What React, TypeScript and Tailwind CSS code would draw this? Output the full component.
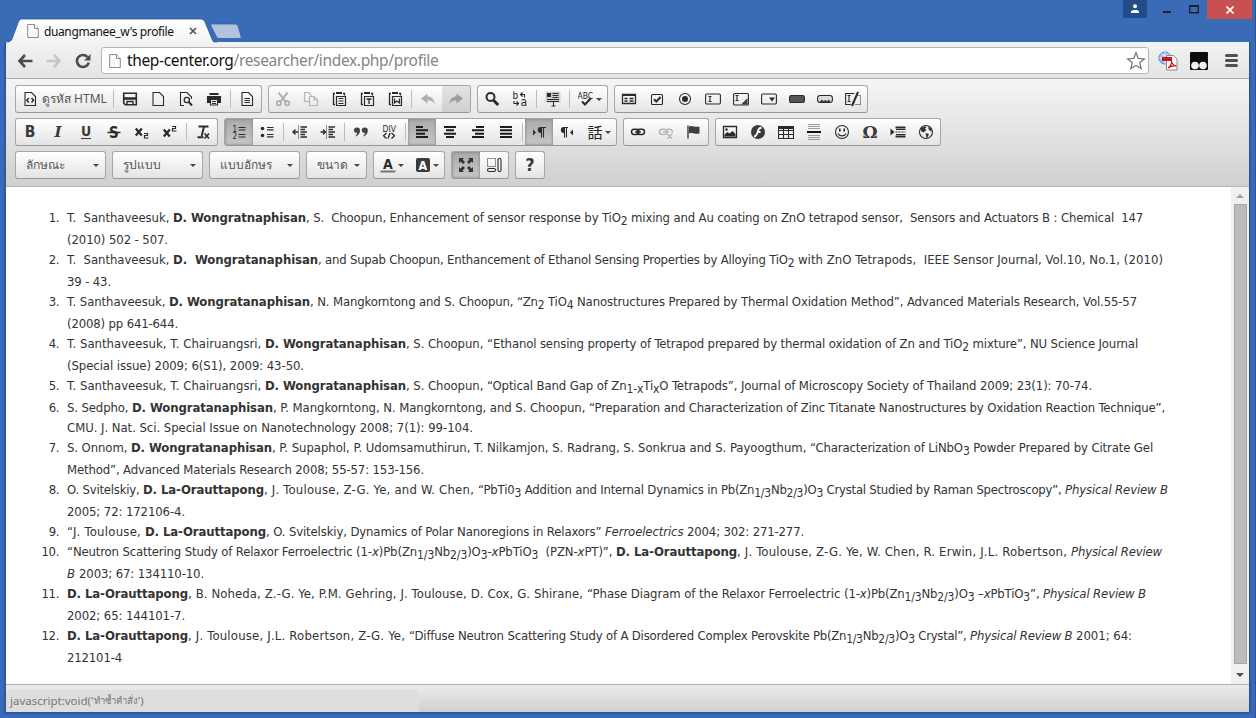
import React, { ReactNode, useLayoutEffect, useRef, useState } from "react";

/* ---------- text runs with a fixed advance ---------- */

function Run({ w, n, className, children }: { w: number; n: number; className?: string; children: ReactNode }) {
  const ref = useRef<HTMLSpanElement>(null);
  const [ls, setLs] = useState<number | null>(null);
  useLayoutEffect(() => {
    if (ls === null && ref.current) {
      setLs((w - ref.current.getBoundingClientRect().width) / n);
    }
  }, [ls, w, n]);
  return (
    <span className={className} style={ls === null ? undefined : { width: w, letterSpacing: ls + "px" }} ref={ref}>
      {children}
    </span>
  );
}

/* [start, kind, text]; "_x_" marks a subscript and "~x~" an italic letter */
type Seg = [number, "n" | "b" | "i", string];
type Line = { h: 20 | 22; end: number; segs: Seg[] };

function rich(s: string): ReactNode[] {
  return s.split(/(_[^_]+_|~[^~]+~)/).map((p, i) => {
    if (p.startsWith("_")) return <sub key={i} className="text-[12px]">{p.slice(1, -1)}</sub>;
    if (p.startsWith("~")) return <em key={i}>{p.slice(1, -1)}</em>;
    return p;
  });
}

const kinds = {
  n: "shrink-0 whitespace-pre",
  b: "shrink-0 whitespace-pre font-bold",
  i: "shrink-0 whitespace-pre italic",
};

function TextLine({ line }: { line: Line }) {
  return (
    <div className={line.h === 22 ? "flex h-[22px] leading-5" : "flex h-5 leading-5"}>
      {line.segs.map(([x, k, t], i) => {
        const next = i + 1 < line.segs.length ? line.segs[i + 1][0] : line.end;
        return (
          <Run key={i} w={next - x} n={t.replace(/[_~]/g, "").length} className={kinds[k]}>
            {rich(t)}
          </Run>
        );
      })}
    </div>
  );
}

const items: Line[][] = [
  [
    { h: 22, end: 1143, segs: [[67, "n", "T.  Santhaveesuk, "], [173, "b", "D. Wongratnaphisan"], [306, "n", ", S.  Choopun, Enhancement of sensor response by "], [602, "n", "TiO_2_ mixing and Au coating on ZnO tetrapod sensor,  Sensors and Actuators B : Chemical  147"]] },
    { h: 20, end: 168, segs: [[67, "n", "(2010) 502 - 507."]] },
  ],
  [
    { h: 22, end: 1163, segs: [[67, "n", "T.  Santhaveesuk, "], [173, "b", "D.  Wongratanaphisan"], [318, "n", ", and Supab Choopun, Enthancement of Ethanol Sensing Properties by Alloying TiO_2_ "], [798, "n", "with ZnO Tetrapods,  IEEE Sensor Journal, Vol.10, No.1, (2010)"]] },
    { h: 20, end: 111, segs: [[67, "n", "39 - 43."]] },
  ],
  [
    { h: 22, end: 1137, segs: [[67, "n", "T. Santhaveesuk, "], [169, "b", "D. Wongratanaphisan"], [310, "n", ", N. Mangkorntong and S. Choopun, "], [517, "n", "“Zn_2_ TiO_4_ "], [577, "n", "Nanostructures Prepared by Thermal Oxidation Method”, Advanced Materials Research, Vol.55-57"]] },
    { h: 20, end: 178, segs: [[67, "n", "(2008) pp 641-644."]] },
  ],
  [
    { h: 22, end: 1138, segs: [[67, "n", "T. Santhaveesuk, T. Chairuangsri, "], [265, "b", "D. Wongratanaphisan"], [406, "n", ", S. Choopun, "], [487, "n", "“Ethanol sensing property of Tetrapod prepared by thermal oxidation of Zn and TiO_2_ mixture”, NU Science Journal"]] },
    { h: 20, end: 304, segs: [[67, "n", "(Special issue) 2009; 6(S1), 2009: 43-50."]] },
  ],
  [
    { h: 22, end: 1092, segs: [[67, "n", "T. Santhaveesuk, T. Chairuangsri, "], [265, "b", "D. Wongratanaphisan"], [406, "n", ", S. Choopun, "], [487, "n", "“Optical Band Gap of Zn_1-x_Ti_x_O Tetrapods”, Journal of Microscopy Society of Thailand 2009; 23(1): 70-74."]] },
  ],
  [
    { h: 20, end: 1165, segs: [[67, "n", "S. Sedpho, "], [132, "b", "D. Wongratanaphisan"], [273, "n", ", P. Mangkorntong, N. Mangkorntong, and S. Choopun, "], [589, "n", "“Preparation and Characterization of Zinc Titanate Nanostructures by Oxidation Reaction Technique”,"]] },
    { h: 20, end: 473, segs: [[67, "n", "CMU. J. Nat. Sci. Special Issue on Nanotechnology 2008; 7(1): 99-104."]] },
  ],
  [
    { h: 22, end: 1153, segs: [[67, "n", "S. Onnom, "], [131, "b", "D. Wongratanaphisan"], [272, "n", ", P. Supaphol, P. Udomsamuthirun, T. Nilkamjon, S. Radrang, S. Sonkrua and S. Payoogthum, "], [810, "n", "“Characterization of LiNbO_3_ Powder Prepared by Citrate Gel"]] },
    { h: 20, end: 424, segs: [[67, "n", "Method”, Advanced Materials Research 2008; 55-57: 153-156."]] },
  ],
  [
    { h: 22, end: 1168, segs: [[67, "n", "O. Svitelskiy, "], [143, "b", "D. La-Orauttapong"], [264, "n", ", J. Toulouse, Z-G. Ye, and W. Chen, "], [478, "n", "“PbTi0_3_ Addition and Internal Dynamics in "], [721, "n", "Pb(Zn_1/3_Nb_2/3_)O_3_ Crystal Studied by Raman Spectroscopy”, "], [1065, "i", "Physical Review B"]] },
    { h: 20, end: 185, segs: [[67, "n", "2005; 72: 172106-4."]] },
  ],
  [
    { h: 20, end: 804, segs: [[67, "n", "“J. Toulouse, "], [145, "b", "D. La-Orauttapong"], [266, "n", ", O. Svitelskiy, Dynamics of Polar Nanoregions in Relaxors” "], [605, "i", "Ferroelectrics "], [687, "n", "2004; 302: 271-277."]] },
  ],
  [
    { h: 22, end: 1162, segs: [[67, "n", "“Neutron Scattering Study of Relaxor Ferroelectric "], [356, "n", "(1-~x~)Pb(Zn_1/3_Nb_2/3_)O_3_-~x~PbTiO_3_  (PZN-~x~PT)”, "], [616, "b", "D. La-Orauttapong"], [737, "n", ", J. Toulouse, Z-G. Ye, W. Chen, R. Erwin, J.L. Robertson, "], [1071, "i", "Physical Review"]] },
    { h: 20, end: 204, segs: [[67, "i", "B "], [79, "n", "2003; 67: 134110-10."]] },
  ],
  [
    { h: 22, end: 1146, segs: [[67, "b", "D. La-Orauttapong"], [188, "n", ", B. Noheda, Z.-G. Ye, P.M. Gehring, J. Toulouse, D. Cox, G. Shirane, "], [587, "n", "“Phase Diagram of the Relaxor Ferroelectric "], [844, "n", "(1-~x~)Pb(Zn_1/3_Nb_2/3_)O_3_ –~x~PbTiO_3_”, "], [1043, "i", "Physical Review B"]] },
    { h: 20, end: 185, segs: [[67, "n", "2002; 65: 144101-7."]] },
  ],
  [
    { h: 22, end: 1132, segs: [[67, "b", "D. La-Orauttapong"], [188, "n", ", J. Toulouse, J.L. Robertson, Z-G. Ye, "], [409, "n", "“Diffuse Neutron Scattering Study of A Disordered Complex Perovskite "], [813, "n", "Pb(Zn_1/3_Nb_2/3_)O_3_ Crystal”, "], [970, "i", "Physical Review B "], [1076, "n", "2001; 64:"]] },
    { h: 20, end: 122, segs: [[67, "n", "212101-4"]] },
  ],
];

/* ---------- toolbar ---------- */

function Svg({ children, w = 16, c = "#2a2a2a" }: { children: ReactNode; w?: number; c?: string }) {
  return (
    <svg width={w} height={16} viewBox={`0 0 ${w} 16`} fill="none" stroke={c} strokeWidth="1.1" className="shrink-0" style={{ color: c }}>
      {children}
    </svg>
  );
}

function Group({ children }: { children: ReactNode }) {
  return (
    <div className="flex h-7 shrink-0 overflow-hidden rounded-[3px] border border-[#a6a6a6] border-b-[#979797] bg-linear-to-b from-white to-[#e4e4e4]">
      {children}
    </div>
  );
}

function Btn({ children, on, dim }: { children: ReactNode; on?: boolean; dim?: boolean }) {
  const cls = on
    ? "flex h-[26px] w-7 shrink-0 items-center justify-center bg-linear-to-b from-[#aaaaaa] to-[#c6c6c6] shadow-[inset_0_0_3px_#777]"
    : dim
      ? "flex h-[26px] w-7 shrink-0 items-center justify-center bg-linear-to-b from-[#e4e4e4] to-[#cfcfcf]"
      : "flex h-[26px] w-7 shrink-0 items-center justify-center";
  return <button className={cls}>{children}</button>;
}

function Caret() {
  return <span className="h-0 w-0 border-x-[3px] border-t-[3px] border-x-transparent border-t-[#474747]" />;
}

function ArrowBtn({ children }: { children: ReactNode }) {
  return <button className="flex h-[26px] w-[35px] shrink-0 items-center gap-[2px] pl-[6px]">{children}<Caret /></button>;
}

function Sep() {
  return <span className="mx-[2px] mt-1 h-[18px] w-px shrink-0 bg-[#bdbdbd]" />;
}

function Combo({ label, small }: { label: string; small?: boolean }) {
  return (
    <Group>
      <button className={small ? "flex w-[59px] items-center justify-between pr-[6px] pl-[10px]" : "flex w-[89px] items-center justify-between pr-[6px] pl-[10px]"}>
        <span className="text-[12px] whitespace-nowrap text-[#555]">{label}</span>
        <Caret />
      </button>
    </Group>
  );
}

const page = "M3 1.5h6.5l4 4v9H3z";

function Letter({ t, cls }: { t: string; cls?: string }) {
  return <span className={"font-['DejaVu_Sans',sans-serif] font-stretch-condensed leading-4 font-bold text-[#3a3a3a] " + (cls || "text-[15.5px]")}>{t}</span>;
}

function Clip({ children }: { children: ReactNode }) {
  return (
    <Svg>
      <path d="M4 13.500H2.500v-11H4M12 2.500h1.500v2" strokeWidth="1.300" />
      <path d="M5 2h6" strokeWidth="2" />
      <path d="M5.500 5.500h9v9h-9z" strokeWidth="1.200" />
      {children}
    </Svg>
  );
}

function Lines({ rows }: { rows: [number, number][] }) {
  return <Svg>{rows.map(([x, l], i) => <path key={i} d={`M${x} ${3 + i * 3.33}h${l}`} strokeWidth="2" stroke="#1c1c1c" />)}</Svg>;
}

function Glyph({ x, y, s, children, w = "700" }: { x: number; y: number; s: number; children: ReactNode; w?: string }) {
  return <text x={x} y={y} fontSize={s} fontWeight={w} fill="currentColor" stroke="none" className="font-['DejaVu_Sans',sans-serif] font-stretch-condensed">{children}</text>;
}

function Row1() {
  return (
    <div className="flex gap-[6px]">
      <Group>
        <button className="flex w-[95px] shrink-0 items-center gap-[4px] pl-[6px]">
          <Svg><path d={page} /><path d="M6.8 7l-2 2.2 2 2.2M9.5 7l2 2.2-2 2.2" strokeWidth="1.5" /></Svg>
          <span className="text-[12px] whitespace-nowrap text-[#555]">ดูรหัส HTML</span>
        </button>
        <Sep />
        <Btn><Svg><path d="M1.700 2.200h12.600v11.600H3.200L1.700 12z" strokeWidth="1.600" /><path d="M2 7.500h12" strokeWidth="2.600" /><path d="M5 13.500v-3h6v3" strokeWidth="1.400" /></Svg></Btn>
        <Btn><Svg><path d={page} /></Svg></Btn>
        <Btn><Svg><path d="M6 14.500H2.500v-13H9l4.500 4.500v2" /><circle cx="8.800" cy="9" r="2.600" strokeWidth="1.300" /><path d="M10.700 11l3.300 3.500" strokeWidth="1.900" /></Svg></Btn>
        <Btn><Svg><path d="M3.500 3h9" strokeWidth="2" /><path d="M1.500 5.500h13v6h-2V8h-9v3.500h-2z" fill="#2a2a2a" /><path d="M4.500 8.500h7v5.500h-7zM6 10.500h4M6 12.500h4" /></Svg></Btn>
        <Sep />
        <Btn><Svg><path d={page} /><path d="M5.500 7.500h5.500M5.500 9.500h5.500M5.500 11.500h5.500" strokeWidth="1.200" /></Svg></Btn>
      </Group>
      <Group>
        <Btn><Svg c="#adadad"><path d="M3.500 1.500l7 9M12.500 1.500l-7 9" strokeWidth="2" /><circle cx="3.800" cy="12.300" r="2.100" strokeWidth="1.700" /><circle cx="12.200" cy="12.300" r="2.100" strokeWidth="1.700" /></Svg></Btn>
        <Btn><Svg c="#b5b5b5"><path d="M6.500 10.500h-5v-9h4l3 3M6.500 5.500h4.500l3.500 3.500v5.500h-8z" strokeWidth="1.200" /><path d="M11 6v3h3" /></Svg></Btn>
        <Btn><Clip><path d="M7.500 7.500h5M7.500 10h5M7.500 12.500h5" /></Clip></Btn>
        <Btn><Clip><path d="M7.500 8h5M10 8v5" strokeWidth="1.300" /></Clip></Btn>
        <Btn><Clip><path d="M7.500 7.500v4.500l2.500-2 2.500 2V7.500" strokeWidth="1.300" /></Clip></Btn>
        <Sep />
        <Btn><Svg><path d="M7.500 2.500L1 7.500l6.500 5V9.600c3 0 5 .4 7 3.400C14.500 8 11.500 5.500 7.500 5.500z" fill="#b0b0b0" stroke="none" /></Svg></Btn>
        <Btn dim><Svg><path d="M8.500 2.500L15 7.500l-6.500 5V9.600c-3 0-5 .4-7 3.400C1.500 8 4.500 5.500 8.500 5.500z" fill="#9b9b9b" stroke="none" /></Svg></Btn>
      </Group>
      <Group>
        <Btn><Svg><circle cx="6.500" cy="6" r="4" strokeWidth="2" /><path d="M9.500 9.300l4.700 4.700" strokeWidth="3" /></Svg></Btn>
        <Btn><Svg><Glyph x={0.500} y={8} s={10} w="400">b</Glyph><Glyph x={8.500} y={14.500} s={12} w="400">a</Glyph><path d="M9 3.500h3.500v3M10.500 1.500l-2 2 2 2M2 10v2.500h4M4.500 10.500l2 2-2 2" /></Svg></Btn>
        <Sep />
        <Btn><Svg><path d="M.5 .5h15v11H.5z" fill="#cfcfcf" stroke="none" /><path d="M2.500 2.500h3v3h-3z" fill="#2a2a2a" /><path d="M7.500 2.500h6M7.500 4.500h6M7.500 6.500h6M2 8.500h12M2 10.500h12M8.500 11v4M6.500 15h4" strokeWidth="1" /></Svg></Btn>
        <Sep />
        <ArrowBtn><Svg><Glyph x={-0.500} y={7.500} s={8.500} w="400">ABC</Glyph><path d="M4 10.500l3 3 6-6.500" strokeWidth="2" /></Svg></ArrowBtn>
      </Group>
      <Group>
        <Btn><Svg><path d="M1.500 3.500h13v9h-13z" strokeWidth="1.300" /><path d="M1 4h14" strokeWidth="2" /><path d="M3.500 7.500h3M3.500 10h3M8.500 7.500h4M8.500 10h4" strokeWidth="1.300" /></Svg></Btn>
        <Btn><Svg><rect x="2.500" y="3.500" width="11" height="10" rx="1" /><path d="M5 8.300l2.300 2.300L11.500 6" strokeWidth="2" /></Svg></Btn>
        <Btn><Svg><circle cx="8" cy="8" r="5.500" /><circle cx="8" cy="8" r="3" fill="#2a2a2a" stroke="none" /></Svg></Btn>
        <Btn><Svg><rect x=".6" y="3" width="14.800" height="10" rx="1.200" /><path d="M3.500 5.500h3M3.500 10.500h3M5 5.500v5" /></Svg></Btn>
        <Btn><Svg><rect x=".6" y="2.500" width="14.800" height="11.500" rx="1" /><path d="M2.500 4.500h3M2.500 9.500h3M4 4.500v5M9 13.500L14.500 8M11 13.500l3.500-3.500M13 13.500l1.500-1.500" /></Svg></Btn>
        <Btn><Svg><rect x=".6" y="3" width="14.800" height="10" rx="1.200" /><path d="M8 6.500h6l-3 4z" fill="#2a2a2a" stroke="none" /></Svg></Btn>
        <Btn><Svg><rect x=".6" y="4.500" width="14.800" height="7" rx="1.500" fill="#555" /></Svg></Btn>
        <Btn><Svg><rect x=".6" y="4.500" width="14.800" height="7" rx="2.500" fill="#ddd" /><path d="M2.500 11l2-2.500L6.500 10l2-1 1.500 1 2-1.500 1.500 2.500z" fill="#444" stroke="none" /></Svg></Btn>
        <Btn><Svg><path d="M9.500 2.500H.6v11H6" /><path d="M2.500 4.500h3M2.500 10.500h3M4 4.500v6" /><path d="M13 1L7 15" strokeWidth="2" /><path d="M13.500 4.500h2v9H10" strokeDasharray="1 1" /></Svg></Btn>
      </Group>
    </div>
  );
}

function Row2() {
  return (
    <div className="flex gap-[6px]">
      <Group>
        <Btn><Letter t="B" /></Btn>
        <Btn><span className="font-['DejaVu_Serif',serif] text-[15px] leading-4 font-bold text-[#3a3a3a] italic">I</span></Btn>
        <Btn><Letter t="U" cls="border-b border-[#3a3a3a] text-[14px] leading-[13px]" /></Btn>
        <Btn><Svg><Glyph x={3} y={13.500} s={15}>S</Glyph><path d="M1.500 8.500h13" strokeWidth="1.400" /></Svg></Btn>
        <Btn><Svg><path d="M1.800 4.500l6 7M7.800 4.500l-6 7" strokeWidth="2.300" /><path d="M10 9.500h3.500v2h-3v2.500h4" strokeWidth="1.200" /></Svg></Btn>
        <Btn><Svg><path d="M1.800 5.500l6 7M7.800 5.500l-6 7" strokeWidth="2.300" /><path d="M10 2.500h3.500v2h-3V7h4" strokeWidth="1.200" /></Svg></Btn>
        <Sep />
        <Btn><Svg><path d="M3.500 2.500h10M9 2.500l-2.300 9.500M2.500 13.300h6" strokeWidth="1.900" /><path d="M9.500 9.500l4.500 5M14 9.500l-4.500 5" strokeWidth="1.600" /></Svg></Btn>
      </Group>
      <Group>
        <Btn on><Svg><Glyph x={1.500} y={7.500} s={8} w="400">1</Glyph><Glyph x={1.500} y={14.500} s={8} w="400">2</Glyph><path d="M7.500 3.500h7M7.500 6h7M7.500 10.500h7M7.500 13h7" strokeWidth="1.200" /></Svg></Btn>
        <Btn><Svg><circle cx="3.500" cy="4.500" r="1.800" fill="#2a2a2a" stroke="none" /><circle cx="3.500" cy="11.500" r="1.800" fill="#2a2a2a" stroke="none" /><path d="M8 3.500h6.500M8 5.800h6.500M8 10.500h6.500M8 12.800h6.500" strokeWidth="1.200" /></Svg></Btn>
        <Sep />
        <Btn><Svg><path d="M6.500 1.500v13" strokeDasharray="1 1" /><path d="M8.500 3h6.500M8.500 5.500h4.500M8.500 8h6.500M8.500 10.500h4.500M8.500 13h6.500M.5 8h5.500M3.500 5.500L1 8l2.500 2.500" strokeWidth="1.300" /></Svg></Btn>
        <Btn><Svg><path d="M6.500 1.500v13" strokeDasharray="1 1" /><path d="M8.500 3h6.500M8.500 5.500h4.500M8.500 8h6.500M8.500 10.500h4.500M8.500 13h6.500M.5 8H6M3 5.500L5.500 8 3 10.500" strokeWidth="1.300" /></Svg></Btn>
        <Sep />
        <Btn><Svg><path d="M3.800 3.500a2.700 2.700 0 1 0 .5 5.300C4 10.500 3 11.500 1.800 12.500 5 12 7 9.500 7 6.500a3 3 0 0 0-3.200-3zM11.600 3.500a2.700 2.700 0 1 0 .5 5.300c-.3 1.700-1.300 2.700-2.500 3.700 3.200-.5 5.200-3 5.200-6a3 3 0 0 0-3.200-3z" fill="#444" stroke="none" /></Svg></Btn>
        <Btn><Svg><Glyph x={1.500} y={7.500} s={8.500} w="400">DIV</Glyph><path d="M5.500 9l-3 2.800 3 2.800M10.500 9l3 2.800-3 2.800M9 9l-2 5.500" strokeWidth="1.300" /></Svg></Btn>
        <Sep />
        <Btn on><Lines rows={[[2, 7], [2, 12], [2, 9], [2, 12]]} /></Btn>
        <Btn><Lines rows={[[2, 12], [4, 8], [2, 12], [4, 8]]} /></Btn>
        <Btn><Lines rows={[[6, 8], [2, 12], [5, 9], [2, 12]]} /></Btn>
        <Btn><Lines rows={[[2, 12], [2, 12], [2, 12], [2, 12]]} /></Btn>
        <Sep />
        <Btn on><Svg><path d="M2 5.500l3 3-3 3z" fill="#2a2a2a" stroke="none" /><path d="M10.500 3.500v10M12.500 3.500v10M10 3.500h5" /><path d="M10.500 3H9.800a3 3 0 0 0 0 6h.7z" fill="#2a2a2a" stroke="none" /></Svg></Btn>
        <Btn><Svg><path d="M14 5.500l-3 3 3 3z" fill="#2a2a2a" stroke="none" /><path d="M5.500 3.500v10M7.500 3.500v10M5 3.500h4" /><path d="M5.500 3h-.7a3 3 0 0 0 0 6h.7z" fill="#2a2a2a" stroke="none" /></Svg></Btn>
        <ArrowBtn><span className="w-4 font-['Noto_Sans_CJK_JP',sans-serif] text-[15px] leading-4 text-[#222]">話</span></ArrowBtn>
      </Group>
      <Group>
        <Btn><Svg><rect x="1.500" y="5.200" width="7.500" height="5.200" rx="2.600" strokeWidth="1.500" /><rect x="7" y="5.200" width="7.500" height="5.200" rx="2.600" strokeWidth="1.500" /><path d="M5 7.800h6" strokeWidth="1.300" /></Svg></Btn>
        <Btn><Svg c="#b5b5b5"><rect x="1.500" y="5.200" width="7.500" height="5.200" rx="2.600" strokeWidth="1.500" /><path d="M9 5.200h3a2.600 2.600 0 0 1 2 3.800M5 7.800h6M9.500 10l4.500 4.500M14 10l-4.500 4.500" strokeWidth="1.500" /></Svg></Btn>
        <Btn><Svg><path d="M2 1.500v13" strokeWidth="1.300" /><path d="M3 2.500c4-1.800 5 1 10.500.2v6.800C9 10.800 7.500 8 3 9.500z" fill="#3f3f3f" stroke="none" /></Svg></Btn>
      </Group>
      <Group>
        <Btn><Svg><path d="M1.500 2.500h13v11h-13z" strokeWidth="1.300" /><path d="M2.500 12.500v-2l3-2.500 2 1.500 3-2.500 3 3v2.500z" fill="#2a2a2a" stroke="none" /><circle cx="4.500" cy="5.500" r="1.200" fill="#2a2a2a" stroke="none" /></Svg></Btn>
        <Btn><Svg><circle cx="8" cy="8" r="7" fill="#3a3a3a" stroke="none" /><path d="M11.500 3.500C8 4 8 7 7.300 9c-.6 2-1.500 3.200-3.300 3.500M7.500 8h3" stroke="#fff" strokeWidth="1.800" /></Svg></Btn>
        <Btn><Svg><path d="M.5 2.500h15v12H.5zM.5 6.500h15M.5 10.500h15M5.500 5v9.500M10.500 5v9.500" strokeWidth="1.100" /><path d="M0 3.500h16" strokeWidth="3" /></Svg></Btn>
        <Btn><Svg><path d="M2 .5h12M2 2.500h12M2 4.500h12M2 11.500h12M2 13.500h12M2 15.500h12" stroke="#999" strokeWidth="1" /><path d="M1 8h14" stroke="#111" strokeWidth="2" /></Svg></Btn>
        <Btn><Svg><circle cx="8" cy="8" r="6.500" /><path d="M5.800 4.500v3M10.200 4.500v3" strokeWidth="1.700" /><path d="M4 9.500c1.500 3.200 6.500 3.200 8 0" /></Svg></Btn>
        <Btn><span className="font-['DejaVu_Serif',serif] text-[17px] leading-4 font-bold text-[#3a3a3a]">Ω</span></Btn>
        <Btn><Svg><path d="M.5 4.500l4 3.500-4 3.500z" fill="#2a2a2a" stroke="none" /><path d="M5.500 3.500h10M5.500 12.500h10" strokeWidth="2.200" /><path d="M5.500 8h10" strokeDasharray="2 1" /><path d="M6 5.500h9.500M6 10.500h9.500" /></Svg></Btn>
        <Btn><Svg><circle cx="8" cy="8" r="6.500" /><path d="M2.500 5C4 3.500 6.500 1.800 8.500 3L7 5l1.500 1L5.500 8.500 3.500 7.500zM10 2.800l3 1.700 1 3-2-.5-1.500-2zM7.500 9l3.500 1-1.500 3.500-1 .5z" fill="#333" stroke="none" /></Svg></Btn>
      </Group>
    </div>
  );
}

function Row3() {
  return (
    <div className="flex gap-[6px]">
      <Combo label="ลักษณะ" />
      <Combo label="รูปแบบ" />
      <Combo label="แบบอักษร" />
      <Combo label="ขนาด" small />
      <Group>
        <ArrowBtn><Svg><Glyph x={3} y={11.500} s={14}>A</Glyph><path d="M.5 14.500h15" stroke="#777" strokeWidth="1.800" /></Svg></ArrowBtn>
        <ArrowBtn><Svg><rect x="1" y="1" width="14" height="14" rx="2" fill="#3a3a3a" stroke="none" /><g style={{ color: "#fff" }}><Glyph x={3.500} y={12.500} s={12.500}>A</Glyph></g></Svg></ArrowBtn>
      </Group>
      <Group>
        <Btn on><Svg><path d="M1 1h5L4.500 2.500 7 5 5 7 2.500 4.500 1 6zM15 1v5l-1.500-1.500L11 7 9 5l2.500-2.500L10 1zM1 15v-5l1.500 1.500L5 9l2 2-2.500 2.500L6 15zM15 15h-5l1.500-1.500L9 11l2-2 2.500 2.500L15 10z" fill="#333" stroke="none" /></Svg></Btn>
        <Btn><Svg><path d="M1.500 1.500h8v8h-8z" strokeDasharray="1 1" /><rect x="1.500" y="11.500" width="8" height="3" rx="1.500" /><rect x="12" y="1.500" width="3" height="13" rx="1.200" /></Svg></Btn>
      </Group>
      <Group>
        <Btn><Letter t="?" cls="text-[18px]" /></Btn>
      </Group>
    </div>
  );
}

/* ---------- browser chrome ---------- */

function PageIcon() {
  return (
    <svg width="12" height="16" viewBox="0 0 12 16" fill="#fafafa" stroke="#8d8d8d" className="shrink-0">
      <path d="M.7 1.500h6.800l3.800 4v9H.7z" />
      <path d="M7.500 1.500v4h3.800" />
    </svg>
  );
}

function TitleBar() {
  return (
    <header className="relative flex h-[42px] shrink-0 items-start justify-between bg-[#396bb7]">
      <svg width="250" height="26" viewBox="0 0 250 26" className="absolute top-[18px] left-0">
        <defs>
          <linearGradient id="tab" x1="0" y1="0" x2="0" y2="1">
            <stop offset="0" stopColor="#ffffff" />
            <stop offset="1" stopColor="#f3f3f3" />
          </linearGradient>
        </defs>
        <path d="M6 26C7 24 11 24 12 21L18 5C19 2 20 1 22 1H200C203 1 204 2 205 4L212 21C213 24 214 24.500 217 24.500V26z" fill="url(#tab)" stroke="#2d5595" strokeWidth=".8" />
        <path d="M6.500 26h212v-1.500H7z" fill="#f3f3f3" />
        <path d="M212 6H235C237 6 237.500 7 238 8L241 18C241.500 20 241 20.500 239 20.500H220C218 20.500 217 20 216 18L211 8C210.500 6.500 211 6 212 6z" fill="#b4c3dd" stroke="#2f5da6" strokeWidth=".8" />
      </svg>
      <div className="relative mt-[19px] ml-[27px] flex h-6 items-center">
        <PageIcon />
        <span className="mb-[3px] ml-[5px] w-[130px] whitespace-nowrap">
          <Run w={130} n={21} className="inline-block font-['Noto_Sans',sans-serif] text-[12px] text-[#111]">duangmanee_w's profile</Run>
        </span>
        <svg width="8" height="8" viewBox="0 0 8 8" stroke="#555" strokeWidth="1.700" className="ml-[15px]"><path d="M1 1l6 6M7 1L1 7" /></svg>
      </div>
      <div className="mr-[3px] flex h-[19px] items-start">
        <div className="flex h-[18px] w-6 items-center justify-center bg-[#234b8a]">
          <svg width="10" height="10" viewBox="0 0 10 10" fill="#fff"><circle cx="5" cy="2.300" r="2" /><path d="M1 9V7.500C1 5.500 9 5.500 9 7.500V9z" /></svg>
        </div>
        <svg width="60" height="19" viewBox="0 0 60 19"><path d="M16 11h8v2h-8z" fill="#222" /><path d="M42.700 5.700h8.600v7.100h-8.600z" fill="none" stroke="#222" strokeWidth="1.400" /><path d="M42 6h10" stroke="#222" strokeWidth="2" /></svg>
        <div className="flex h-[19px] w-[45px] items-center justify-center bg-[#c75050]">
          <svg width="8" height="8" viewBox="0 0 8 8" stroke="#fff" strokeWidth="1.700"><path d="M.5 .5l7 7M7.500 .5l-7 7" /></svg>
        </div>
      </div>
    </header>
  );
}

function AddressBar() {
  return (
    <div className="flex h-[37px] shrink-0 items-center border-b border-[#a9a9a9] bg-linear-to-b from-[#f3f3f3] to-[#e4e4e4] pt-px pl-[11px]">
      <svg width="16" height="14" viewBox="0 0 16 14" fill="none" stroke="#4c4c4c" strokeWidth="2.600"><path d="M15.500 7H3M8 1L2.500 7 8 13" /></svg>
      <svg width="16" height="14" viewBox="0 0 16 14" fill="none" stroke="#c6c6c6" strokeWidth="2.600" className="ml-[13px]"><path d="M.5 7H13M8 1l5.500 6L8 13" /></svg>
      <svg width="16" height="16" viewBox="0 0 16 16" fill="none" stroke="#4c4c4c" strokeWidth="2.600" className="ml-[13px]"><path d="M12.500 4A6 6 0 1 0 13.800 9.500" /><path d="M15.500 1v6.500H9z" fill="#4c4c4c" stroke="none" /></svg>
      <div className="ml-[10px] flex h-[27px] w-[1048px] items-center rounded-[3px] border border-[#b4b4b4] bg-white pl-[7px]">
        <PageIcon />
        <Run w={311} n={45} className="ml-[6px] block font-['Noto_Sans',sans-serif] text-[15.500px] whitespace-nowrap text-[#858585]">
          <span className="text-[#111]">thep-center.org</span>/researcher/index.php/profile
        </Run>
        <svg width="20" height="20" viewBox="0 0 20 20" fill="#fff" stroke="#777" strokeWidth="1.300" className="mr-[2px] ml-auto"><path d="M10 1.800l2.300 5.600 6 .5-4.600 3.900 1.400 5.900L10 14.500l-5.100 3.200 1.400-5.900L1.700 7.900l6-.5z" /></svg>
      </div>
      <svg width="20" height="20" viewBox="0 0 20 20" className="ml-[9px]">
        <circle cx="7" cy="7" r="6" fill="#9cc4ee" stroke="#3f7fc6" /><path d="M1 7h12M7 1v12M3 3c3 2 5 2 8 0" stroke="#e4f0fc" fill="none" />
        <path d="M8.500 4.500h7l3.500 3.500v11H8.500z" fill="#fff" stroke="#888" /><path d="M4 6h10v4H4z" fill="#d40f17" /><path d="M10 17c3-2 4-4 3.500-7 .5 3 2 4.500 5 5-3-.5-6 .3-8.500 2z" fill="none" stroke="#d40f17" strokeWidth="1.200" />
      </svg>
      <svg width="18" height="18" viewBox="0 0 18 18" className="ml-[12px]">
        <rect width="18" height="18" rx="1" fill="#0c0c0c" />
        <circle cx="5" cy="13.500" r="3.800" fill="#f2f2f2" />
        <circle cx="13" cy="13.500" r="3.800" fill="#f2f2f2" />
      </svg>
      <svg width="13" height="13" viewBox="0 0 13 13" stroke="#505050" strokeWidth="3" strokeLinecap="round" className="ml-[17px]"><path d="M1.500 1.500h10M1.500 6.500h10M1.500 11.500h10" /></svg>
    </div>
  );
}

export default function App() {
  return (
    <div className="flex h-[718px] w-[1256px] flex-col overflow-hidden border-r border-[#2b5596] bg-[#396bb7] font-['Noto_Sans','Liberation_Sans',sans-serif]">
      <TitleBar />
      <main className="ml-[6px] flex h-[670px] w-[1243px] flex-col bg-white shadow-[0_0_2px_1px_#24498a]">
        <AddressBar />
        <section className="flex h-[108px] shrink-0 flex-col gap-[5px] border-b border-[#b6b6b6] bg-linear-to-b from-[#f5f5f5] to-[#cfd1cf] pt-[6px] pl-[9px]">
          <Row1 />
          <Row2 />
          <Row3 />
        </section>
        <section className="flex h-[497px] shrink-0">
          <ol className="flex w-[1225px] flex-col pt-[21px] font-['DejaVu_Sans',sans-serif] text-[13px] font-stretch-condensed text-[#333]">
            {items.map((ls, i) => (
              <li key={i} className="flex">
                <span className="w-[53px] shrink-0 text-right leading-5 tracking-[-0.4px]">{i + 1}.</span>
                <div className="ml-2 flex flex-col">
                  {ls.map((l, j) => <TextLine key={j} line={l} />)}
                </div>
              </li>
            ))}
          </ol>
          <aside className="flex w-[18px] flex-col items-center bg-[#f0f0f0]">
            <span className="mt-[7px] h-0 w-0 border-x-4 border-b-4 border-x-transparent border-b-[#a0a0a0]" />
            <span className="mt-[6px] h-[460px] w-[13px] border border-[#a6a6a6] bg-[#bcbcbc]" />
            <span className="mt-[9px] h-0 w-0 border-x-4 border-t-4 border-x-transparent border-t-[#505050]" />
          </aside>
        </section>
        <footer className="flex flex-1 flex-col justify-end border-t border-[#b0b0b0] bg-linear-to-b from-[#ebebeb] to-[#cfd1cf]">
          <div className="flex h-[22px] w-[413px] items-center rounded-tr-[3px] bg-[#dedede] pl-1 text-[11.500px] whitespace-nowrap text-[#777]">
            <span>javascript:void('</span>
            <span className="text-[9.500px]">ทำซ้ำคำสั่ง</span>
            <span>')</span>
          </div>
        </footer>
      </main>
    </div>
  );
}
